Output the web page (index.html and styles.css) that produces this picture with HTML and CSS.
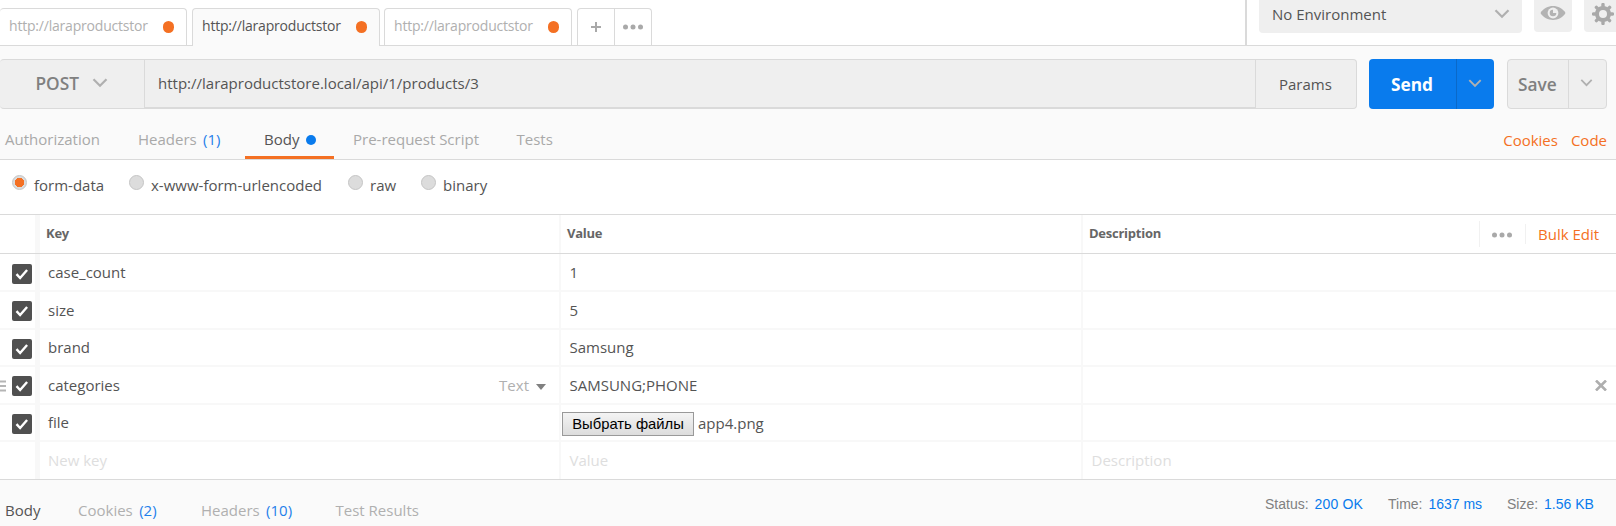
FILE: index.html
```html
<!DOCTYPE html>
<html lang="en">
<head>
<meta charset="utf-8">
<title>Request builder</title>
<link rel="stylesheet" href="styles.css">
</head>
<body>
<svg class="defs" width="0" height="0">
  <symbol id="chevron" viewBox="0 0 16 10"><path d="M1.5 1.2 8 7.8l6.500-6.600" fill="none" stroke="currentColor" stroke-width="2.200"/></symbol>
  <symbol id="tick" viewBox="0 0 20 20"><path d="m4.500 10.200 3.600 3.800 7-8" fill="none" stroke="#fff" stroke-width="2.400"/></symbol>
  <symbol id="dots" viewBox="0 0 20 6"><circle cx="2.500" cy="3" r="2.500"/><circle cx="10" cy="3" r="2.500"/><circle cx="17.500" cy="3" r="2.500"/></symbol>
</svg>
<header class="topbar">
  <nav class="tabs">
    <div class="tab tab-first"><span class="tab-name">http://laraproductstor</span><i class="unsaved"></i></div>
    <div class="tab tab-active"><span class="tab-name">http://laraproductstor</span><i class="unsaved"></i></div>
    <div class="tab"><span class="tab-name">http://laraproductstor</span><i class="unsaved"></i></div>
    <div class="tab-tools">
      <span class="tool"><svg width="10" height="10" viewBox="0 0 10 10"><path d="M5 0v10M0 5h10" stroke="#a9a9a9" stroke-width="2"/></svg></span>
      <span class="tool"><svg class="dots" width="20" height="6"><use href="#dots"/></svg></span>
    </div>
  </nav>
  <div class="environment">
    <div class="env-select"><span>No Environment</span><svg class="chev" width="16" height="10"><use href="#chevron"/></svg></div>
    <div class="env-button eye"><svg width="26" height="16" viewBox="0 0 26 16"><path d="M.5 8C6-1.300 20-1.300 25.500 8 20 17.300 6 17.300.5 8Z" fill="#b3b3b3"/><circle cx="13" cy="8" r="5.400" fill="#efefef"/><path d="M13 4.700V8h3.300A3.300 3.300 0 1 1 13 4.700Z" fill="#b3b3b3"/></svg></div>
    <div class="env-button gear"><svg width="22" height="22" viewBox="-11 -11 22 22"><g fill="none" stroke="#a9a9a9"><circle r="6" stroke-width="4"/><path d="M0-9.500v2M0 7.500v2M-9.500 0h2M7.500 0h2M-6.600-6.600l1.500 1.500M5.100 5.100l1.500 1.500M-6.600 6.600l1.500-1.500M5.100-5.100l1.500-1.500" stroke-width="3.400" stroke-linecap="round"/></g></svg></div>
  </div>
</header>

<section class="builder">
  <div class="url-row">
    <div class="url-group">
      <div class="method"><span>POST</span><svg class="chev" width="16" height="10"><use href="#chevron"/></svg></div>
      <div class="url"><span>http://laraproductstore.local/api/1/products/3</span></div>
      <div class="params"><span>Params</span></div>
    </div>
    <div class="send"><span class="send-main">Send</span><span class="send-more"><svg class="chev" width="14" height="9"><use href="#chevron"/></svg></span></div>
    <div class="save"><span class="save-main">Save</span><span class="save-more"><svg class="chev" width="13" height="8"><use href="#chevron"/></svg></span></div>
  </div>
  <div class="sections">
    <span class="section s-auth">Authorization</span>
    <span class="section s-headers">Headers <b class="count">(1)</b></span>
    <span class="section s-body">Body<i class="filled"></i></span>
    <span class="section s-script">Pre-request Script</span>
    <span class="section s-tests">Tests</span>
    <span class="links"><a class="cookies">Cookies</a><a class="code">Code</a></span>
  </div>
</section>

<div class="modes">
  <label class="mode m-form"><i class="radio checked"></i><span>form-data</span></label>
  <label class="mode m-url"><i class="radio"></i><span>x-www-form-urlencoded</span></label>
  <label class="mode m-raw"><i class="radio"></i><span>raw</span></label>
  <label class="mode m-bin"><i class="radio"></i><span>binary</span></label>
</div>

<main class="grid">
  <div class="row head">
    <div class="check"></div><div class="key"><span class="t">Key</span></div><div class="value"><span class="t">Value</span></div>
    <div class="desc"><span class="t description">Description</span><span class="more"><svg class="dots" width="20" height="6"><use href="#dots"/></svg></span><span class="bulk"><span class="bulk-label">Bulk Edit</span></span></div>
  </div>
  <div class="row r38 first"><div class="check"><svg class="box" width="20" height="20"><use href="#tick"/></svg></div><div class="key"><span class="t">case_count</span></div><div class="value"><span class="t">1</span></div><div class="desc"></div></div>
  <div class="row r38"><div class="check"><svg class="box" width="20" height="20"><use href="#tick"/></svg></div><div class="key"><span class="t">size</span></div><div class="value"><span class="t">5</span></div><div class="desc"></div></div>
  <div class="row r37"><div class="check"><svg class="box" width="20" height="20"><use href="#tick"/></svg></div><div class="key"><span class="t">brand</span></div><div class="value"><span class="t">Samsung</span></div><div class="desc"></div></div>
  <div class="row r38"><div class="check"><svg class="handle" width="6" height="12" viewBox="0 0 6 12"><path d="M0 1.500h6M0 6h6M0 10.500h6" stroke="#b5b5b5" stroke-width="2"/></svg><svg class="box" width="20" height="20"><use href="#tick"/></svg></div><div class="key"><span class="t">categories</span><span class="type">Text</span><i class="caret"></i></div><div class="value"><span class="t">SAMSUNG;PHONE</span></div><div class="desc"><svg class="remove" width="12" height="11" viewBox="0 0 12 11"><path d="m1 .5 10 10M11 .5l-10 10" stroke="#aeaeae" stroke-width="2.600"/></svg></div></div>
  <div class="row r37"><div class="check"><svg class="box" width="20" height="20"><use href="#tick"/></svg></div><div class="key"><span class="t">file</span></div><div class="value file"><button class="pick"><span>Выбрать файлы</span></button><span class="filename">app4.png</span></div><div class="desc"></div></div>
  <div class="row r37 new"><div class="check"></div><div class="key"><span class="t">New key</span></div><div class="value"><span class="t">Value</span></div><div class="desc"><span class="t">Description</span></div></div>
</main>

<footer class="response">
  <span class="res res-body">Body</span>
  <span class="res res-cookies">Cookies <b class="count">(2)</b></span>
  <span class="res res-headers">Headers <b class="count">(10)</b></span>
  <span class="res res-tests">Test Results</span>
  <div class="stats">
    <span class="stat status">Status: <b>200 OK</b></span>
    <span class="stat time">Time: <b>1637 ms</b></span>
    <span class="stat size">Size: <b>1.56 KB</b></span>
  </div>
</footer>
</body>
</html>
```

FILE: styles.css
```css
* { box-sizing: border-box; }
body { margin: 0; width: 1616px; height: 526px; overflow: hidden; background: #fff; font: 15px/22px "Open Sans", sans-serif; color: #545454; }
svg { display: block; flex: none; }
.defs { position: absolute; }
span, a { white-space: nowrap; }
.chev { color: #b0b0b0; }
.dots { fill: #a9a9a9; }
.count { font-weight: 400; color: #1f80ea; margin-left: 2.500px; }

/* request tabs and environment picker */
.topbar { display: flex; justify-content: space-between; height: 46px; border-bottom: 1px solid #dadada; }
.tabs { display: flex; height: 46px; padding-top: 8px; }
.tab { display: flex; align-items: center; justify-content: space-between; width: 188px; height: 37px; margin-right: 4px; padding: 0 12px 0 9px; border: 1px solid #dadada; border-bottom: 0; border-radius: 4px 4px 0 0; color: #b0b0b0; font-size: 14px; letter-spacing: -0.2px; }
.tab-first { width: 187px; margin-right: 5px; border-left: 0; }
.tab-active { height: 38px; padding-bottom: 1px; background: #fafafa; color: #545454; }
.tab-name { margin-top: -2px; }
.unsaved { width: 11px; height: 12px; border-radius: 6px; background: #f47023; }
.tab-tools { display: flex; width: 75px; height: 37px; margin-left: 1px; border: 1px solid #dadada; border-bottom: 0; border-radius: 4px 4px 0 0; }
.tool { display: flex; width: 36px; align-items: center; justify-content: center; }
.tool + .tool { width: 37px; border-left: 1px solid #dadada; }
.environment { display: flex; width: 371px; border-left: 2px solid #dadada; padding-left: 12px; }
.env-select { display: flex; justify-content: space-between; width: 263px; height: 33px; padding: 3px 12px 0 13px; border-radius: 0 0 4px 4px; background: #efefef; }
.env-select .chev { margin-top: 6px; }
.env-button { width: 38px; height: 32px; margin-left: 12px; border-radius: 0 0 4px 4px; background: #efefef; flex: none; }
.eye { padding: 5px 0 0 6px; }
.gear { width: 32px; padding: 3px 0 0 8px; border-radius: 0 0 0 4px; }

/* address row */
.builder { height: 114px; background: #fafafa; border-bottom: 1px solid #dadada; padding-top: 13px; }
.url-row { display: flex; height: 50px; }
.url-group { display: flex; width: 1357px; border: 1px solid #dadada; border-left: 0; border-radius: 4px; background: #efefef; }
.method { display: flex; width: 144px; padding: 13px 0 0 35.500px; font-weight: 600; font-size: 17.300px; color: #808080; }
.method .chev { margin: 5px 0 0 12.500px; }
.url { width: 1112px; padding: 12px 0 0 13px; border: 1px solid #dadada; border-top: 0; }
.params { padding: 13px 0 0 23px; }
.send { display: flex; width: 125px; margin-left: 12px; border-radius: 4px; background: #097bed; color: #fff; font-weight: 700; font-size: 17.300px; }
.send-main { width: 87px; padding: 15px 0 0 22px; }
.send-more { border-left: 1px solid #0a69c9; padding: 20px 0 0 11px; flex: 1; }
.save { display: flex; width: 100px; margin-left: 13px; border: 1px solid #dadada; border-radius: 4px; background: #efefef; color: #808080; font-weight: 600; font-size: 17.300px; }
.save-main { width: 60px; padding: 14px 0 0 10px; }
.save-more { border-left: 1px solid #dadada; padding: 19px 0 0 11px; flex: 1; }
.sections { display: flex; height: 50px; padding: 19px 9px 0 5px; color: #a9a9a9; }
.s-auth { width: 133px; }
.s-headers { width: 107px; }
.s-body { display: flex; width: 89px; height: 31px; padding-left: 19px; border-bottom: 3px solid #f47023; color: #545454; margin-right: 19px; }
.filled { width: 10px; height: 10px; margin: 7px 0 0 7px; border-radius: 5px; background: #097bed; }
.s-script { width: 163.500px; }
.links { display: flex; gap: 13px; margin: 1px 0 0 auto; color: #f47023; }

/* body type */
.modes { display: flex; height: 55px; padding: 15px 0 0 12px; border-bottom: 1px solid #dadada; }
.mode { display: flex; }
.mode span { margin: -1px 0 0 7px; }
.m-form { width: 117px; }
.m-url { width: 219px; }
.m-raw { width: 73px; }
.radio { width: 15px; height: 15px; border: 1px solid #c5c5c5; border-radius: 50%; background: #dcdcdc; }
.checked { background: radial-gradient(circle, #f47023 4.500px, #dcdcdc 5px); }

/* form data */
.grid { height: 265px; border-bottom: 1px solid #dadada; }
.row { display: grid; grid-template-columns: 40px 521px 522px 533px; border-bottom: 2px solid #f8f8f8; }
.row > div { display: flex; }
.check { border-right: 5px solid #f8f8f8; padding: 9px 0 0 12px; position: relative; }
.first .check { padding-top: 10px; }
.key, .value { border-right: 2px solid #f8f8f8; }
.t { padding: 7px 0 0 8px; }
.r37 .t { padding-top: 6px; }
.row.new .t { padding-top: 7px; }
.value .t, .desc .t { padding-left: 8.500px; }
.head { height: 39px; border-bottom: 1px solid #dadada; font-size: 13px; font-weight: 700; color: #666; }
.head .t { padding: 7px 0 0 6px; letter-spacing: -0.250px; }
.head .value .t, .head .desc .t { padding-left: 6px; }
.r38 { height: 38px; }
.r37 { height: 37px; }
.box { border-radius: 2px; background: #505050; }
.handle { position: absolute; left: 0; top: 13px; }
.type { margin-left: auto; padding-top: 7px; color: #b0b0b0; }
.caret { margin: 17px 13px 0 7px; width: 10px; height: 6px; background: #808080; clip-path: polygon(0 0, 100% 0, 50% 100%); }
.remove { margin: 13px 9.500px 0 auto; }
.file { padding: 7px 0 0 1px; }
.pick { width: 132px; height: 24px; padding: 0; border: 1px solid #999; background: linear-gradient(#f4f4f4, #dcdcdc); color: #000; font: 14.800px "Liberation Sans", Arial, sans-serif; }
.filename { margin-left: 4px; }
.more { width: 46px; height: 26px; margin: 6px 0 0 auto; padding: 11px 0 0 12px; border-left: 1px solid #f1f1f1; }
.bulk { width: 91px; height: 20px; margin-top: 9px; border-left: 1px solid #f1f1f1; padding-left: 12px; color: #f47023; font-size: 15px; font-weight: 400; line-height: 20px; }
.new { color: #dedede; border-bottom: 0; }

/* response summary */
.response { display: flex; height: 46px; padding: 19px 0 0 5px; background: #fafafa; color: #b0b0b0; }
.res-body { width: 73px; color: #545454; }
.res-cookies { width: 123px; }
.res-headers { width: 134.500px; }
.stats { display: flex; width: 351px; margin: -5px 0 0 auto; color: #808080; font: 14px/20px "Liberation Sans", Arial, sans-serif; }
.stats b { font-weight: 400; color: #097bed; margin-left: 2px; }
.status { width: 123px; }
.status b { letter-spacing: 0.200px; }
.time { width: 119px; }
```
